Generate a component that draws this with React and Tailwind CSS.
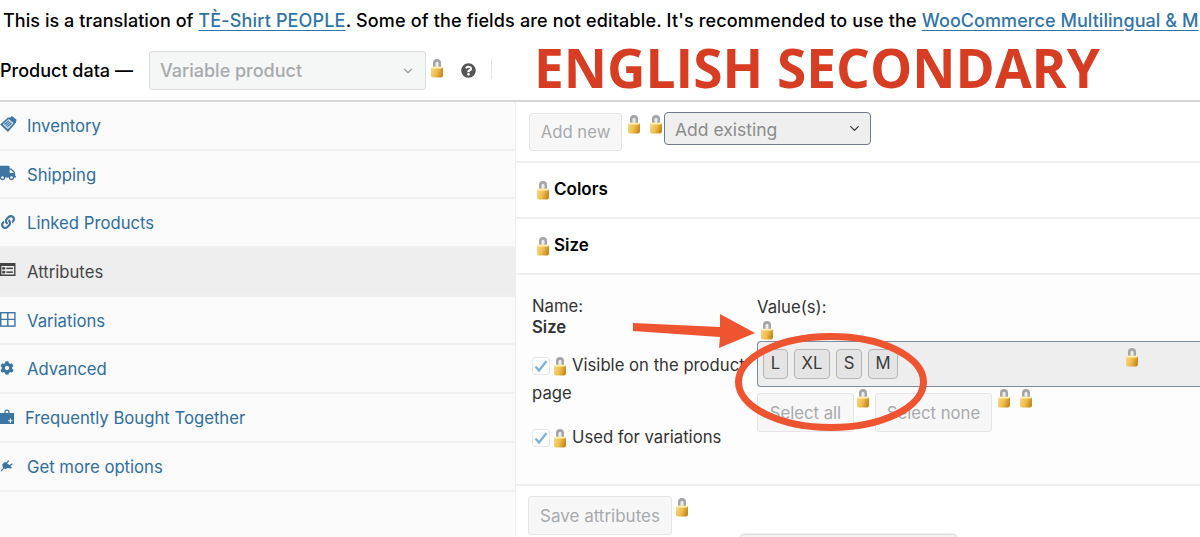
import React from 'react';
import { FaCog, FaLink, FaTruck, FaQuestionCircle } from 'react-icons/fa';
import { ChevronDown } from 'lucide-react';

const Lock = ({ className = '' }) => (
  <svg viewBox="0 0 14 20" className={`w-[14px] h-[20px] shrink-0 ${className}`}>
    <defs>
      <linearGradient id="lockBody" x1="0" y1="0" x2="1" y2="0.3">
        <stop offset="0" stopColor="#f7dc8a" />
        <stop offset="0.6" stopColor="#edbb48" />
        <stop offset="1" stopColor="#c98d22" />
      </linearGradient>
    </defs>
    <path d="M3 10V5a4 4 0 0 1 8 0v5z" fill="#a3a5a8" />
    <path d="M5.500 9.500V5.200a1.500 1.500 0 0 1 3 0v4.300z" fill="#ececec" />
    <rect x="1" y="8.800" width="12" height="10.700" rx="2" fill="url(#lockBody)" />
    <rect x="1.600" y="8.800" width="10.800" height="1.600" rx="0.800" fill="#fff1b8" />
  </svg>
);

const TagIcon = () => (
  <svg viewBox="0 0 17 17" className="w-[17px] h-[17px] text-[#3c75a4]" fill="currentColor">
    <path d="M8 1.400 10.500 1.400 11.700 0l1.600 1 3.200 2.800-.5 2.600L8 16 .2 8.500z" />
    <path d="M2.600 8.500 8.600 3l5 4-5.600 6.300z" fill="#cfe0ee" />
    <path d="M4.500 8.500 8.800 4.800M5.800 9.700 10.200 5.900M7.200 10.900 11.500 7" stroke="#3c75a4" strokeWidth="1.100" />
  </svg>
);

const AttrIcon = () => (
  <svg viewBox="0 0 16 14" className="w-4 h-[14px] text-[#444]" fill="currentColor">
    <path d="M0 0h15.500v13H0zM1.400 3v8.600h12.700V3z" />
    <rect x="2.200" y="4.200" width="3" height="2.400" />
    <rect x="2.200" y="8" width="3" height="2.400" />
    <rect x="6.400" y="4.600" width="6.600" height="1.500" />
    <rect x="6.400" y="8.400" width="6.600" height="1.500" />
  </svg>
);

const GridIcon = () => (
  <svg viewBox="0 0 16 15" className="w-4 h-[15px] text-[#3c75a4]" fill="none" stroke="currentColor" strokeWidth="1.400">
    <rect x="0.700" y="0.700" width="14.200" height="13.400" />
    <path d="M7.800 .7v13.400M.7 7.400h14.200" />
  </svg>
);

const BagIcon = () => (
  <svg viewBox="0 0 14 15" className="w-[14px] h-[15px] text-[#3c75a4]" fill="currentColor">
    <path d="M4.400 4V3a2.600 2.600 0 0 1 5.200 0v1H14v11H0V4zm1.300 0h2.600V3a1.300 1.300 0 0 0-2.600 0z" />
    <path d="M8.200 11.200h1.600V9.600h1.100v1.600h1.600v1.100h-1.600v1.600H9.800v-1.600H8.200z" fill="#fafafa" />
  </svg>
);

const PlugIcon = () => (
  <svg viewBox="0 0 14 14" className="w-[14px] h-[14px] text-[#3c75a4]" fill="currentColor">
    <path d="M1.700 13.600 0.600 12.600l2.500-2.300-.9-3.700L5 3.800l1 1 2.300-2.500 1 .8-2.200 2.500 2.300 1.500 2.700-1.800.8 1-2.600 1.800 1.600 1.400-.8 1.100-3.900-.6-1.800 1.300-1.400-.8z" />
  </svg>
);

const tabs = [
  { label: 'Inventory', icon: <TagIcon /> },
  { label: 'Shipping', icon: <FaTruck className="w-[18px] h-[18px] text-[#3c75a4] -ml-[2px]" /> },
  { label: 'Linked Products', icon: <FaLink className="w-[14px] h-[14px] text-[#3c75a4] ml-px" /> },
  { label: 'Attributes', icon: <AttrIcon />, active: true },
  { label: 'Variations', icon: <GridIcon /> },
  { label: 'Advanced', icon: <FaCog className="w-[14px] h-[14px] text-[#3c75a4]" /> },
  { label: 'Frequently Bought Together', icon: <BagIcon />, narrow: true },
  { label: 'Get more options', icon: <PlugIcon /> },
];

const DisabledButton = ({ children, className = '' }) => (
  <div className={`flex items-center justify-center pt-[2px] rounded-[3px] border border-[#e2e4e7] bg-[#f7f7f7] text-[#a7aaad] ${className}`}>
    {children}
  </div>
);

const Check = () => (
  <span className="flex items-center justify-center w-[18px] h-[18px] rounded-[3px] border border-[#e6e6e6] bg-white shrink-0">
    <svg viewBox="0 0 14 14" className="w-[14px] h-[14px]" fill="none" stroke="#82aee0" strokeWidth="2.400">
      <path d="M1.500 7.500 5 11.500 12.500 2" />
    </svg>
  </span>
);

const Chip = ({ children, className = '' }) => (
  <span className={`flex items-center justify-center h-[30px] rounded-[4px] border border-[#b5b5b5] bg-[#e4e4e4] text-[#3a3a3a] ${className}`}>
    {children}
  </span>
);

export default function App() {
  return (
    <div className="relative w-[1200px] h-[537px] overflow-hidden bg-white text-[16.7px] text-[#1d1d1d] font-['Inter',sans-serif]">
      <div className="h-[40px] pl-[3px] flex items-center whitespace-nowrap text-black text-[18px] font-medium tracking-[0.16px]">
        <span className="tracking-[0.06px]">This is a translation of&nbsp;</span>
        <span className="text-[#2f75a8] underline underline-offset-[3px]">TÈ-Shirt PEOPLE</span>. Some of the fields are not editable. It's recommended to use the&nbsp;
        <span className="text-[#2f75a8] underline underline-offset-[3px] tracking-[0.06px]">WooCommerce Multilingual &amp; M</span>
      </div>

      <div className="h-[62px] flex items-start border-b-2 border-[#d5d5d5]">
        <span className="mt-[17px] w-[149px] text-[18px] font-medium text-black whitespace-nowrap">Product data —</span>
        <div className="mt-[11px] w-[277px] h-[39px] flex items-center justify-between pl-[10px] pr-[10px] rounded-[3px] border border-[#dcdcde] bg-[#f5f6f6] text-[#a7aaad] font-medium text-[18px]">
          Variable product
          <ChevronDown className="w-[14px] h-[14px] text-[#9a9a9a]" />
        </div>
        <Lock className="mt-[18px] ml-[4px]" />
        <FaQuestionCircle className="mt-[23px] ml-[17px] w-[15px] h-[15px] text-[#555]" />
        <div className="mt-[19px] ml-[15px] w-px h-[20px] bg-[#e5e5e5]" />
        <span className="ml-[42px] mt-[-3px] leading-[62px] text-[53.2px] font-bold text-[#d63d22] whitespace-nowrap font-['Open_Sans',sans-serif]">ENGLISH SECONDARY</span>
      </div>

      <div className="flex h-[435px]">
        <div className="w-[516px] shrink-0 bg-[#fafafa] border-r border-[#eeeeee]">
          {tabs.map((tab) => (
            <div
              key={tab.label}
              className={`h-[48.7px] flex items-center pt-[2px] border-b-2 border-[#f0f0f0] ${tab.active ? 'bg-[#eeeeee] text-[#444]' : 'text-[#2f6f9f]'}`}
            >
              <span className={`${tab.narrow ? 'w-[25px]' : 'w-[27px]'} h-[20px] -mt-[4px] flex items-center shrink-0`}>{tab.icon}</span>
              <span>{tab.label}</span>
            </div>
          ))}
        </div>

        <div className="flex-1 min-w-0">
          <div className="h-[61px] flex items-start pl-[13px] border-b-2 border-[#f0f0f0]">
            <DisabledButton className="mt-[11px] w-[93px] h-[38px]">Add new</DisabledButton>
            <Lock className="mt-[12px] ml-[5px]" />
            <Lock className="mt-[12px] ml-[8px]" />
            <div className="mt-[10px] ml-px w-[207px] h-[33px] pt-[4px] flex items-center justify-between pl-[10px] pr-[8px] rounded-[4px] border border-[#6d7b8c] bg-[#efefef] text-[#8b8b8b] text-[17.5px]">
              Add existing
              <ChevronDown className="w-[15px] h-[15px] text-[#333] -mt-[5px]" />
            </div>
          </div>

          <div className="h-[56px] flex items-center pl-[20px] gap-[4px] border-b-2 border-[#f0f0f0] font-semibold text-black text-[17px]">
            <Lock />
            Colors
          </div>
          <div className="h-[56px] flex items-center pl-[20px] gap-[4px] border-b-2 border-[#f0f0f0] font-semibold text-black text-[17px]">
            <Lock />
            Size
          </div>

          <div className="h-[211px] flex bg-[#fdfdfd] border-b-2 border-[#eeeeee] text-[#333]">
            <div className="w-[241px] pl-[16px] pt-[21px] shrink-0">
              <div className="leading-[21px]">Name:</div>
              <div className="leading-[21px] font-semibold">Size</div>
              <div className="mt-[17px] flex items-center gap-[3px] h-[22px] whitespace-nowrap">
                <Check />
                <Lock />
                <span className="ml-[2px]">Visible on the product</span>
              </div>
              <div className="mt-[5px] leading-[22px]">page</div>
              <div className="mt-[23px] flex items-center gap-[3px] h-[22px] whitespace-nowrap">
                <Check />
                <Lock />
                <span className="ml-[2px]">Used for variations</span>
              </div>
            </div>

            <div className="flex-1 min-w-0 pt-[21px]">
              <div className="leading-[22px]">Value(s):</div>
              <Lock className="ml-[3px] mt-[2px]" />
              <div className="relative mt-px h-[46px] w-[460px] flex items-center gap-[6px] pl-[5px] border border-r-0 border-[#7f8da0] rounded-l-[4px] bg-[#eeeeee]">
                <Chip className="w-[25px]">L</Chip>
                <Chip className="w-[36px]">XL</Chip>
                <Chip className="w-[26px]">S</Chip>
                <Chip className="w-[30px]">M</Chip>
                <Lock className="absolute left-[367px] top-[5px]" />
              </div>
              <div className="mt-[6px] flex items-start">
                <DisabledButton className="w-[97px] h-[39px]">Select all</DisabledButton>
                <Lock className="ml-[2px] -mt-[5px]" />
                <DisabledButton className="ml-[5px] w-[117px] h-[39px]">Select none</DisabledButton>
                <Lock className="ml-[5px] -mt-[5px]" />
                <Lock className="ml-[8px] -mt-[5px]" />
              </div>
            </div>
          </div>

          <div className="flex items-start pl-[12px] pt-[10px]">
            <DisabledButton className="w-[144px] h-[39px] text-[17px]">Save attributes</DisabledButton>
            <Lock className="ml-[3px] mt-px" />
          </div>
        </div>
      </div>

      {/* annotation drawn over the screenshot */}
      <svg className="absolute left-0 top-0 pointer-events-none" width="1200" height="537" fill="none">
        <path d="M633 323 L720 327 L720 314 L755 333 L719 348 L720 337 L633 331 Z" fill="#ee5430" />
        <ellipse cx="831" cy="382" rx="92.500" ry="45.500" stroke="#ee5430" strokeWidth="7" />
      </svg>

      {/* bottom edge of a tooltip coming in from below */}
      <div className="absolute left-[741px] top-[535px] w-[215px] h-[10px] rounded-t-[3px] bg-[#f4f4f4] shadow-[0_0_3px_rgba(0,0,0,0.4)]" />
    </div>
  );
}
